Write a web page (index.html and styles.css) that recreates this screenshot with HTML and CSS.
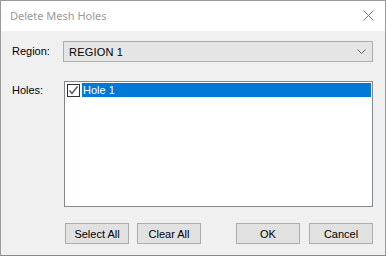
FILE: index.html
```html
<!DOCTYPE html>
<html>
<head>
<meta charset="utf-8">
<link rel="stylesheet" href="styles.css">
</head>
<body>
<div class="window">
  <div class="titlebar">
    <span class="title">Delete Mesh Holes</span>
    <svg class="close" width="11" height="11" viewBox="0 0 11 11"><path d="M0.5 0.5 L10.5 10.5 M10.5 0.5 L0.5 10.5" stroke="#7a7a7a" stroke-width="1" fill="none"/></svg>
  </div>
  <div class="content">
    <div class="row region-row">
      <span class="label">Region:</span>
      <div class="combo">
        <span class="combo-text">REGION 1</span>
        <svg class="chev" width="9" height="5" viewBox="0 0 9 5"><path d="M0.5 0.5 L4.5 4.5 L8.5 0.5" stroke="#606060" stroke-width="1" fill="none"/></svg>
      </div>
    </div>
    <div class="row holes-row">
      <span class="label">Holes:</span>
      <div class="listbox">
        <div class="item">
          <span class="check"><svg width="11" height="11" viewBox="0 0 11 11"><path d="M1.5 5.5 L4 8.5 L9.5 1.5" stroke="#555" stroke-width="1.4" fill="none"/></svg></span>
          <span class="item-text">Hole 1</span>
        </div>
      </div>
    </div>
    <div class="buttons">
      <div class="group">
        <button class="btn">Select All</button>
        <button class="btn">Clear All</button>
      </div>
      <div class="group group-right">
        <button class="btn">OK</button>
        <button class="btn">Cancel</button>
      </div>
    </div>
  </div>
</div>
</body>
</html>
```
FILE: styles.css
```css
html, body {
  margin: 0;
  padding: 0;
  background: #f0f0f0;
}
.window {
  width: 386px;
  height: 256px;
  box-sizing: border-box;
  border: 1px solid #9a9a9a;
  border-bottom-color: #8a8a8a;
  display: flex;
  flex-direction: column;
  background: #f0f0f0;
}
.titlebar {
  height: 30px;
  background: #ffffff;
  display: flex;
  align-items: center;
  justify-content: space-between;
  padding: 0 11px 0 9px;
}
.title {
  font-family: "Noto Sans", "Open Sans", sans-serif;
  font-size: 11px;
  color: #9a9a9a;
  margin-top: -2px;
}
.close {
  margin-top: -1px;
}
.content {
  flex: 1;
  padding: 10px 12px 0 11px;
  font-family: "Liberation Sans", Arial, sans-serif;
  font-size: 11px;
  color: #000;
}
.row {
  display: grid;
  grid-template-columns: 51px 1fr;
}
.label {
  padding-top: 4px;
}
.combo {
  height: 21px;
  box-sizing: border-box;
  border: 1px solid #adadad;
  background: #e5e5e5;
  display: flex;
  align-items: center;
  justify-content: space-between;
  padding: 0 6px 0 5px;
}
.combo-text {
  letter-spacing: 0.2px;
}
.holes-row {
  margin-top: 19px;
}
.holes-row .label {
  padding-top: 3px;
}
.listbox {
  margin-left: 1px;
  height: 126px;
  box-sizing: border-box;
  border: 1px solid #828790;
  background: #fff;
  padding: 1px 1px 0 1px;
}
.item {
  display: flex;
  align-items: center;
  height: 14px;
}
.check {
  width: 13px;
  height: 13px;
  box-sizing: border-box;
  border: 1px solid #333;
  background: #fff;
  margin-left: 1px;
  margin-right: 2px;
  display: flex;
  align-items: center;
  justify-content: center;
}
.check svg {
  display: block;
}
.item-text {
  flex: 1;
  background: #0078d7;
  color: #fff;
  height: 14px;
  line-height: 14px;
  padding-left: 1px;
}
.buttons {
  margin-top: 16px;
  display: flex;
  justify-content: space-between;
  padding-left: 53px;
}
.group {
  display: flex;
  gap: 8px;
}
.group-right {
  gap: 9px;
}
.btn {
  width: 64px;
  height: 21px;
  margin: 0;
  padding: 0;
  border: 1px solid #adadad;
  background: #e1e1e1;
  font-family: "Liberation Sans", Arial, sans-serif;
  font-size: 11px;
  color: #000;
}
```
